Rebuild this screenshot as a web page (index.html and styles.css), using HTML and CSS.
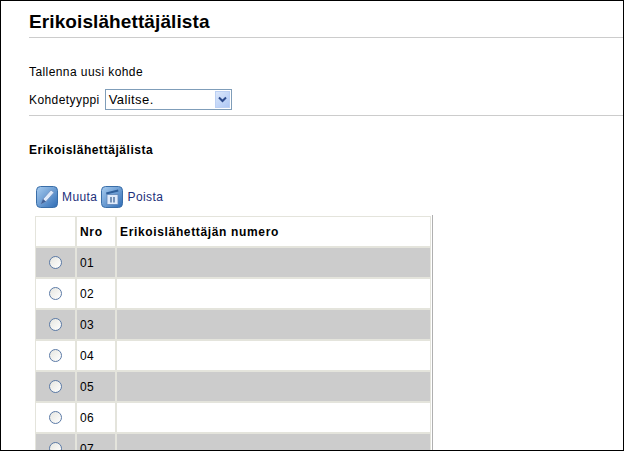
FILE: index.html
```html
<!DOCTYPE html>
<html lang="fi">
<head>
<meta charset="UTF-8" />
<title>Erikoislähettäjälista</title>
<link rel="stylesheet" href="styles.css">
</head>
<body>

<div class="page">
  <h1 class="title">Erikoislähettäjälista</h1>

  <p class="new-label">Tallenna uusi kohde</p>
  <div class="type-row">
    <label>Kohdetyyppi</label>
    <div class="select">
      <span>Valitse.</span>
      <span class="select-btn">
        <svg width="9" height="7" viewBox="0 0 9 7"><path d="M1 1.500 L4.500 5 L8 1.500" fill="none" stroke="#2b4a8c" stroke-width="2"/></svg>
      </span>
    </div>
  </div>

  <h2 class="subtitle">Erikoislähettäjälista</h2>

  <div class="toolbar">
    <svg class="tool-icon" width="22" height="22" viewBox="0 0 22 22">
      <defs>
        <linearGradient id="blue1" x1="0" y1="0" x2="1" y2="1">
          <stop offset="0" stop-color="#a9cdf0"/>
          <stop offset="1" stop-color="#2f6cb5"/>
        </linearGradient>
      </defs>
      <rect x="0.5" y="0.5" width="21" height="21" rx="4" fill="url(#blue1)" stroke="#3a6ea8"/>
      <path d="M5 18 L7 13 L15 4 L18 6.500 L10 15.500 Z" fill="#dfeafa" stroke="#6f8fc0" stroke-width="0.8"/>
      <path d="M5 18 L7 13 L10 15.500 Z" fill="#3f5f95"/>
    </svg>
    <a class="tool-link" href="#">Muuta</a>
    <svg class="tool-icon" width="22" height="22" viewBox="0 0 22 22">
      <defs>
        <linearGradient id="blue2" x1="0" y1="0" x2="1" y2="1">
          <stop offset="0" stop-color="#a9cdf0"/>
          <stop offset="1" stop-color="#2f6cb5"/>
        </linearGradient>
      </defs>
      <rect x="0.5" y="0.5" width="21" height="21" rx="4" fill="url(#blue2)" stroke="#3a6ea8"/>
      <path d="M5 6.500 L17 3.500 L17.500 5.500 L5.500 8.500 Z" fill="#2f5f9a"/>
      <rect x="6" y="8.500" width="11" height="10" fill="#dfeafa" stroke="#5f86b8" stroke-width="0.8"/>
      <path d="M10 11 V16.500 M13 11 V16.500" stroke="#33598c" stroke-width="1.200"/>
    </svg>
    <a class="tool-link" href="#">Poista</a>
  </div>

  <table class="list">
    <tr>
      <th class="col-radio"></th>
      <th class="col-nro">Nro</th>
      <th>Erikoislähettäjän numero</th>
    </tr>
    <tr class="odd"><td class="radio-cell"><span class="radio"></span></td><td>01</td><td></td></tr>
    <tr><td class="radio-cell"><span class="radio"></span></td><td>02</td><td></td></tr>
    <tr class="odd"><td class="radio-cell"><span class="radio"></span></td><td>03</td><td></td></tr>
    <tr><td class="radio-cell"><span class="radio"></span></td><td>04</td><td></td></tr>
    <tr class="odd"><td class="radio-cell"><span class="radio"></span></td><td>05</td><td></td></tr>
    <tr><td class="radio-cell"><span class="radio"></span></td><td>06</td><td></td></tr>
    <tr class="odd"><td class="radio-cell"><span class="radio"></span></td><td>07</td><td></td></tr>
  </table>
</div>

</body>
</html>
```

FILE: styles.css
```css
html, body {
  margin: 0;
  height: 100%;
  background: #fff;
}

body {
  font-family: "Liberation Sans", Arial, sans-serif;
  font-size: 12px;
  letter-spacing: 0.42px;
  color: #000;
}

.page {
  box-sizing: border-box;
  width: 624px;
  height: 451px;
  border: 1px solid #000;
  overflow: hidden;
  padding-left: 28px;
}

.title {
  margin: 0;
  padding: 10px 0 4px;
  height: 22px;
  line-height: 22px;
  font-size: 19px;
  letter-spacing: 0.1px;
  font-weight: bold;
  border-bottom: 1px solid #ccc;
}

.new-label {
  margin: 0;
  padding-top: 27px;
  line-height: 14px;
}

.type-row {
  display: flex;
  align-items: center;
  gap: 5px;
  margin-top: 10px;
  padding: 0 0 5px;
  height: 21px;
  border-bottom: 1px solid #ccc;
}

.select {
  box-sizing: border-box;
  width: 127px;
  height: 21px;
  border: 1px solid #7f9db9;
  display: flex;
  justify-content: space-between;
  padding: 1px 1px 1px 3px;
  line-height: 17px;
  font-size: 13px;
}

.select-btn {
  width: 15px;
  background: linear-gradient(135deg, #dbe7fb, #aec8f5);
  border: 1px solid #bcd0f3;
  box-sizing: border-box;
  display: flex;
  align-items: center;
  justify-content: center;
}

.subtitle {
  margin: 0;
  padding-top: 27px;
  line-height: 15px;
  font-size: 12px;
  letter-spacing: 0.55px;
  font-weight: bold;
}

.toolbar {
  display: flex;
  align-items: center;
  gap: 4px;
  margin: 28px 0 0 7px;
  height: 22px;
}

.tool-link {
  color: #1d2f7a;
  text-decoration: none;
}

.list {
  margin: 7px 0 0 5px;
  width: 399px;
  border-collapse: separate;
  border-spacing: 2px;
  border-right: 1px solid #b0b0b0;
  table-layout: fixed;
}

.list th, .list td {
  height: 29px;
  padding: 0 3px;
  box-shadow: 0 0 0 1px #e4e4dc;
  text-align: left;
  font-size: 12px;
}

.list th {
  letter-spacing: 0.65px;
}

.col-radio { width: 33px; }
.col-nro { width: 32px; }

.odd td { background: #ccc; }

.radio-cell { text-align: center !important; }

.radio {
  display: inline-block;
  box-sizing: border-box;
  width: 13px;
  height: 13px;
  margin-top: -2px;
  border: 1px solid #5b7aa6;
  border-radius: 50%;
  background: linear-gradient(135deg, #e6e6e0, #fff);
  vertical-align: middle;
}
```
